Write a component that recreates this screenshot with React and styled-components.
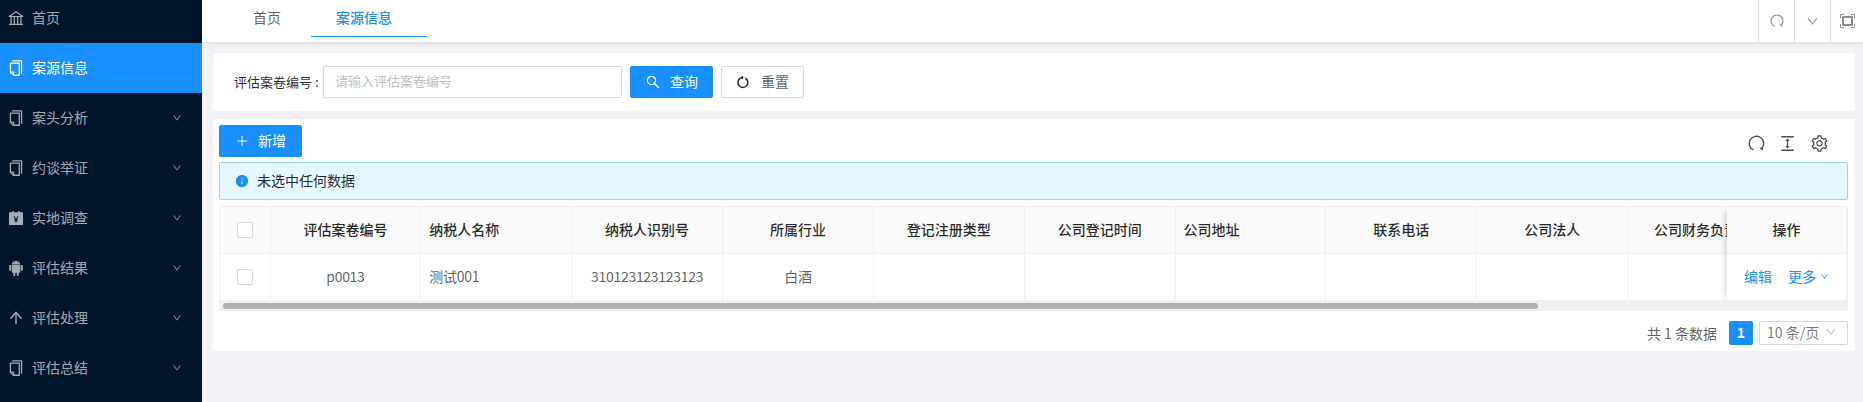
import React from 'react';
import styled, { createGlobalStyle } from 'styled-components';
import {
  AiOutlineBank,
  AiOutlineCopy,
  AiFillAccountBook,
  AiFillAndroid,
  AiOutlineArrowUp,
  AiOutlineDown,
  AiOutlineSearch,
  AiOutlinePlus,
  AiFillInfoCircle,
  AiOutlineColumnHeight,
  AiOutlineSetting,
} from 'react-icons/ai';

const GlobalStyle = createGlobalStyle`
  html, body {
    margin: 0;
    padding: 0;
    height: 100%;
    overflow: hidden;
    background: #f0f2f5;
    font-family: "Noto Sans CJK SC", "Noto Sans", sans-serif;
    font-size: 14px;
    color: rgba(0, 0, 0, 0.85);
  }
  #root { height: 100%; }
`;

const Layout = styled.div`
  display: flex;
  height: 402px;
  overflow: hidden;
`;

const Sidebar = styled.aside`
  width: 202px;
  flex: none;
  background: #001529;
  overflow: hidden;
`;

const Menu = styled.ul`
  list-style: none;
  margin: -7px 0 0;
  padding: 0;
`;

const MenuItem = styled.li`
  display: flex;
  align-items: center;
  height: 50px;
  padding: 0 20px 0 7px;
  color: ${(p) => (p.$active ? '#fff' : 'rgba(255, 255, 255, 0.65)')};
  background: ${(p) => (p.$active ? '#1890ff' : 'transparent')};
  svg { flex: none; }
`;

const MenuLabel = styled.span`
  margin-left: 7px;
  flex: 1;
  line-height: 20px;
  padding-bottom: 2px;
`;

const Main = styled.main`
  flex: 1;
  min-width: 0;
`;

const TopBar = styled.header`
  display: flex;
  align-items: stretch;
  height: 42px;
  background: #fff;
  box-shadow: 0 1px 4px rgba(0, 21, 41, 0.12);
  position: relative;
`;

const Tabs = styled.nav`
  display: flex;
  flex: 1;
  padding-left: 26px;
`;

const Tab = styled.div`
  width: ${(p) => p.$width}px;
  height: 37px;
  padding-left: 25px;
  box-sizing: border-box;
  line-height: 35px;
  color: ${(p) => (p.$active ? '#1890ff' : 'rgba(0, 0, 0, 0.65)')};
  font-weight: ${(p) => (p.$active ? 500 : 400)};
  border-bottom: 1px solid ${(p) => (p.$active ? '#1890ff' : 'transparent')};
`;

const TopAction = styled.button`
  width: ${(p) => p.$width || 36}px;
  padding: 0;
  border: 0;
  border-left: 1px solid #d9d9d9;
  background: none;
  color: #8c8c8c;
  display: flex;
  align-items: center;
  justify-content: center;
`;

const Content = styled.div`
  padding: 11px 8px 0 11px;
`;

const Card = styled.section`
  background: #fff;
  border-radius: 2px;
`;

const SearchCard = styled(Card)`
  display: flex;
  align-items: center;
  height: 58px;
  padding-left: 21px;
  margin-bottom: 8px;
`;

const FieldLabel = styled.label`
  font-size: 13px;
  width: 89px;
  flex: none;
  white-space: nowrap;
  padding-bottom: 2px;
`;

const TextInput = styled.div`
  width: 299px;
  height: 32px;
  box-sizing: border-box;
  border: 1px solid #d9d9d9;
  border-radius: 2px;
  padding-left: 11px;
  line-height: 28px;
  font-size: 13px;
  color: #bfbfbf;
  margin-right: 8px;
`;

const Button = styled.button`
  display: inline-flex;
  align-items: center;
  justify-content: center;
  gap: ${(p) => p.$gap || 9}px;
  width: ${(p) => p.$width}px;
  height: 32px;
  padding: 0 0 2px;
  margin-right: 8px;
  border-radius: 2px;
  font-family: inherit;
  font-size: 14px;
  border: 1px solid ${(p) => (p.$primary ? '#1890ff' : '#d9d9d9')};
  background: ${(p) => (p.$primary ? '#1890ff' : '#fff')};
  color: ${(p) => (p.$primary ? '#fff' : 'rgba(0, 0, 0, 0.65)')};
  box-shadow: 0 2px 0 rgba(0, 0, 0, 0.02);
  svg { margin-top: 2px; }
`;

const TableCard = styled(Card)`
  height: 232px;
  padding: 6px 7px 0 6px;
  box-sizing: border-box;
`;

const ToolRow = styled.div`
  display: flex;
  justify-content: space-between;
  align-items: center;
  height: 32px;
  margin-bottom: 5px;
`;

const ToolIcons = styled.div`
  display: flex;
  align-items: center;
  gap: 13px;
  margin: 4px 19px 0 0;
  color: rgba(0, 0, 0, 0.7);
`;

const Alert = styled.div`
  display: flex;
  align-items: center;
  gap: 8px;
  height: 38px;
  box-sizing: border-box;
  padding: 0 0 2px 15px;
  margin-bottom: 6px;
  background: #e6f7ff;
  border: 1px solid #91d5ff;
  border-radius: 2px;
`;

const TableWrap = styled.div`
  position: relative;
  overflow: hidden;
  background: #f0f0f0;
  height: 105px;
  border: 1px solid #f0f0f0;
  border-bottom: 0;
  box-sizing: border-box;
`;

const Grid = styled.div`
  display: grid;
  grid-template-columns: 50.5px repeat(10, 150.85px);
  width: max-content;
`;

const Cell = styled.div`
  height: 47px;
  display: flex;
  align-items: center;
  justify-content: ${(p) => (p.$left ? 'flex-start' : 'center')};
  padding: 0 ${(p) => (p.$left ? '8px' : '0')} 2px;
  box-sizing: border-box;
  white-space: nowrap;
  overflow: hidden;
  border-right: 1px solid #f0f0f0;
  border-bottom: 1px solid #f0f0f0;
`;

const HeadCell = styled(Cell)`
  background: #fafafa;
  font-weight: 500;
  color: rgba(0, 0, 0, 0.85);
`;

const BodyCell = styled(Cell)`
  background: #fff;
  color: rgba(0, 0, 0, 0.65);
  letter-spacing: -0.3px;
`;

const Check = styled.span`
  width: 16px;
  height: 16px;
  box-sizing: border-box;
  border: 1px solid #d9d9d9;
  border-radius: 2px;
  background: #fff;
  margin-top: 2px;
`;

const FixedColumn = styled.div`
  position: absolute;
  top: 0;
  right: 0;
  width: 120px;
  box-shadow: -6px 0 6px -4px rgba(0, 0, 0, 0.15);
  z-index: 2;
`;

const ScrollTrack = styled.div`
  position: absolute;
  left: 3px;
  right: 0;
  top: 96px;
  height: 6px;
`;

const ScrollThumb = styled.div`
  width: 1315px;
  height: 100%;
  background: #b0b0b0;
  border-radius: 3px;
`;

const LinkGroup = styled.div`
  display: flex;
  align-items: center;
  color: #1890ff;
  gap: 16px;
  letter-spacing: 0;
`;

const More = styled.span`
  display: inline-flex;
  align-items: center;
  gap: 4px;
`;

const Pager = styled.div`
  display: flex;
  align-items: center;
  justify-content: flex-end;
  height: 24px;
  margin-top: 10px;
  font-size: 14px;
  color: rgba(0, 0, 0, 0.65);
`;

const PageNumber = styled.span`
  width: 24px;
  height: 24px;
  margin: 0 6px 0 12px;
  line-height: 23px;
  text-align: center;
  background: #1890ff;
  color: #fff;
  font-weight: 700;
  border-radius: 2px;
`;

const PageSize = styled.div`
  width: 89px;
  height: 24px;
  box-sizing: border-box;
  display: flex;
  align-items: center;
  justify-content: space-between;
  padding: 0 10px 2px 7px;
  border: 1px solid #d9d9d9;
  border-radius: 2px;
  color: rgba(0, 0, 0, 0.55);
`;

// curved arrow used by the refresh actions
const ReloadIcon = ({ size = 16 }) => (
  <svg width={size} height={size} viewBox="0 0 16 16" fill="none" stroke="currentColor">
    <path d="M5 14.1A6.8 6.8 0 1 1 12.9 12.7" strokeWidth="1.3" />
    <path d="M10.6 12h3.2v2.9z" fill="currentColor" stroke="none" />
  </svg>
);

// small ring with the arrow head on top, for the reset button
const ResetIcon = () => (
  <svg width="14" height="14" viewBox="0 0 13 13" fill="none" stroke="#262626">
    <path d="M4.2 2.9a4.6 4.6 0 1 0 4.4 0" strokeWidth="1.4" />
    <path d="M6.6 .6v3.6L3.6 2.6z" fill="#262626" stroke="none" />
  </svg>
);

const ExpandIcon = () => (
  <svg width="15" height="14" viewBox="0 0 15 14" fill="none">
    <path d="M.5 4V.5H4M11 .5h3.5V4M14.5 10v3.5H11M4 13.5H.5V10" stroke="currentColor" />
    <rect x="3" y="3" width="9" height="8" fill="none" stroke="currentColor" strokeWidth="2" />
  </svg>
);

const menu = [
  { label: '首页', icon: AiOutlineBank },
  { label: '案源信息', icon: AiOutlineCopy, active: true },
  { label: '案头分析', icon: AiOutlineCopy, sub: true },
  { label: '约谈举证', icon: AiOutlineCopy, sub: true },
  { label: '实地调查', icon: AiFillAccountBook, sub: true },
  { label: '评估结果', icon: AiFillAndroid, sub: true },
  { label: '评估处理', icon: AiOutlineArrowUp, sub: true },
  { label: '评估总结', icon: AiOutlineCopy, sub: true },
];

const columns = [
  { title: '评估案卷编号', value: 'p0013' },
  { title: '纳税人名称', value: '测试001', left: true },
  { title: '纳税人识别号', value: '310123123123123' },
  { title: '所属行业', value: '白酒' },
  { title: '登记注册类型' },
  { title: '公司登记时间' },
  { title: '公司地址', left: true },
  { title: '联系电话' },
  { title: '公司法人' },
  { title: '公司财务负责人' },
];

const App = () => (
  <Layout>
    <GlobalStyle />
    <Sidebar>
      <Menu>
        {menu.map(({ label, icon: Icon, active, sub }) => (
          <MenuItem key={label} $active={active}>
            <Icon size={18} />
            <MenuLabel>{label}</MenuLabel>
            {sub && <AiOutlineDown size={10} />}
          </MenuItem>
        ))}
      </Menu>
    </Sidebar>
    <Main>
      <TopBar>
        <Tabs>
          <Tab $width={83}>首页</Tab>
          <Tab $width={116} $active>案源信息</Tab>
        </Tabs>
        <TopAction><ReloadIcon size={14} /></TopAction>
        <TopAction><AiOutlineDown size={13} /></TopAction>
        <TopAction $width={33}><ExpandIcon /></TopAction>
      </TopBar>
      <Content>
        <SearchCard>
          <FieldLabel>评估案卷编号 :</FieldLabel>
          <TextInput>请输入评估案卷编号</TextInput>
          <Button $primary $width={83}><AiOutlineSearch size={16} />查询</Button>
          <Button $width={83} $gap={11}><ResetIcon />重置</Button>
        </SearchCard>
        <TableCard>
          <ToolRow>
            <Button $primary $width={83}><AiOutlinePlus size={14} />新增</Button>
            <ToolIcons>
              <ReloadIcon size={17} />
              <AiOutlineColumnHeight size={19} />
              <AiOutlineSetting size={19} />
            </ToolIcons>
          </ToolRow>
          <Alert>
            <AiFillInfoCircle size={14} color="#1890ff" style={{ marginTop: 2 }} />
            未选中任何数据
          </Alert>
          <TableWrap>
            <Grid>
              <HeadCell><Check /></HeadCell>
              {columns.map((c) => (
                <HeadCell key={c.title} $left={c.left}>{c.title}</HeadCell>
              ))}
              <BodyCell><Check /></BodyCell>
              {columns.map((c) => (
                <BodyCell key={c.title} $left={c.left}>{c.value}</BodyCell>
              ))}
            </Grid>
            <FixedColumn>
              <HeadCell>操作</HeadCell>
              <BodyCell>
                <LinkGroup>
                  <span>编辑</span>
                  <More>更多<AiOutlineDown size={9} /></More>
                </LinkGroup>
              </BodyCell>
            </FixedColumn>
            <ScrollTrack><ScrollThumb /></ScrollTrack>
          </TableWrap>
          <Pager>
            共 1 条数据
            <PageNumber>1</PageNumber>
            <PageSize>10 条/页<AiOutlineDown size={12} color="#bfbfbf" /></PageSize>
          </Pager>
        </TableCard>
      </Content>
    </Main>
  </Layout>
);

export default App;
